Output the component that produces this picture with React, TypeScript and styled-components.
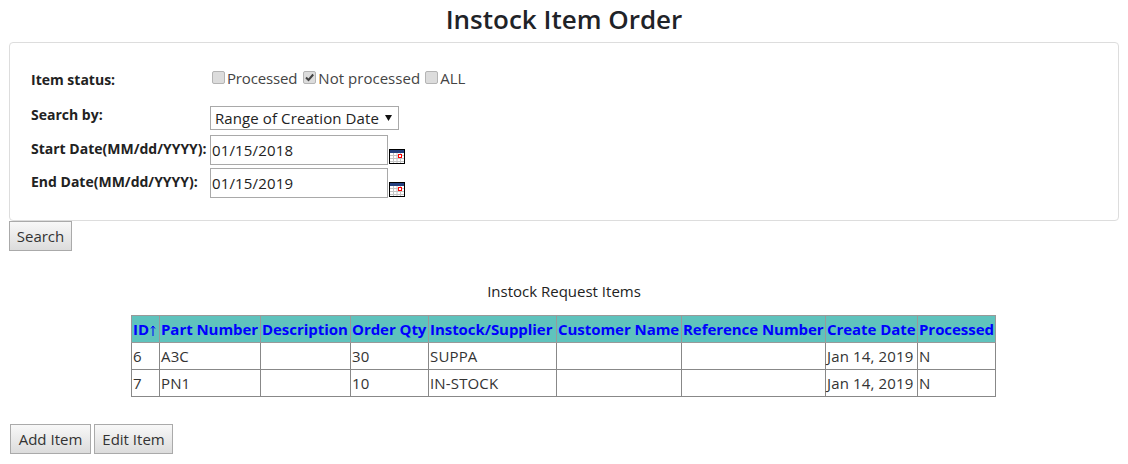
import React from "react";
import styled, { createGlobalStyle } from "styled-components";

const Global = createGlobalStyle`
  html, body { margin: 0; padding: 0; background: #fff; }
  body { font-family: "Open Sans", "Noto Sans", "Liberation Sans", sans-serif; font-size: 15px; color: #222; }
  * { box-sizing: border-box; }
`;

const Page = styled.div`
  width: 1128px;
  height: 464px;
  padding: 0 9px;
  overflow: hidden;
`;

const Title = styled.h1`
  margin: 0;
  height: 42px;
  font-size: 26px;
  line-height: 38px;
  font-weight: 600;
  text-align: center;
  color: #1f2328;
`;

const Panel = styled.section`
  width: 1110px;
  height: 179px;
  border: 1px solid #ddd;
  border-radius: 4px;
  padding: 21px 21px 0;
  display: grid;
  grid-template-columns: 179px 1fr;
  grid-template-rows: 30px 41px 33px 33px;
  align-items: center;
`;

const Label = styled.label<{ $raise?: boolean }>`
  font-size: 14px;
  font-weight: 700;
  color: #222;
  white-space: nowrap;
  padding-bottom: ${(p) => (p.$raise ? "6px" : "0")};
`;

const StatusRow = styled.div`
  display: flex;
  align-items: center;
  padding-bottom: 2px;
`;

const Option = styled.label<{ $track: number; $after: number }>`
  display: inline-flex;
  align-items: center;
  gap: 2px;
  margin: 0 ${(p) => p.$after}px 0 2px;
  font-size: 15px;
  letter-spacing: ${(p) => p.$track}px;
  color: #444;
`;

const Box = styled.input`
  appearance: none;
  width: 13px;
  height: 13px;
  margin: 0 0 2px;
  border: 1px solid #b4b4b4;
  border-radius: 2px;
  background: #dcdcdc no-repeat center;
  &:checked {
    background-image: url("data:image/svg+xml,%3Csvg xmlns='http://www.w3.org/2000/svg' width='11' height='11' viewBox='0 0 11 11'%3E%3Cpath d='M2 5.5L4.5 8L9.2 2.5' fill='none' stroke='%23444' stroke-width='2'/%3E%3C/svg%3E");
  }
`;

const SelectCell = styled.div`
  align-self: end;
  display: flex;
  margin-bottom: 5px;
`;

const Select = styled.select`
  appearance: none;
  width: 189px;
  height: 24px;
  padding: 0 0 0 4px;
  border: 1px solid #a9a9a9;
  border-radius: 0;
  font-family: inherit;
  font-size: 15px;
  letter-spacing: 0.1px;
  color: #222;
  background: #fff url("data:image/svg+xml,%3Csvg xmlns='http://www.w3.org/2000/svg' width='7' height='6'%3E%3Cpath d='M0 0H7L3.5 6Z' fill='%23111'/%3E%3C/svg%3E") no-repeat 174px 8px;
`;

const DateRow = styled.div`
  align-self: start;
  display: flex;
  align-items: flex-end;
  gap: 1px;
`;

const DateInput = styled.input`
  width: 178px;
  height: 30px;
  padding: 0 0 0 1px;
  border: 1px solid #a9a9a9;
  border-radius: 0;
  font-family: inherit;
  font-size: 15px;
  letter-spacing: 0.15px;
  color: #222;
`;

const CalendarIcon = styled.svg`
  flex: none;
  margin-bottom: 1px;
`;

const Calendar = () => (
  <CalendarIcon width="16" height="15" viewBox="0 0 16 15" aria-hidden="true">
    <rect x="0.5" y="0.5" width="15" height="14" fill="#fff" stroke="#000" />
    <rect x="1" y="1" width="14" height="3" fill="#24407f" />
    <path d="M1 6.5h14M1 9.5h14M1 12.5h14M4.5 4v10M8 4v10M11.5 4v10" stroke="#c4c4c4" strokeWidth="1" />
    <rect x="9.5" y="5.5" width="3" height="3" fill="#fff" stroke="#f00" />
  </CalendarIcon>
);

const Button = styled.button<{ $w: number }>`
  width: ${(p) => p.$w}px;
  height: 30px;
  padding: 0;
  border: 1px solid #aaa;
  border-radius: 0;
  background: linear-gradient(#f8f8f8, #dcdcdc);
  font-family: inherit;
  font-size: 15px;
  color: #333;
`;

const Caption = styled.div`
  margin-top: 30px;
  height: 34px;
  text-align: center;
  font-size: 15px;
  line-height: 20px;
  color: #222;
`;

const Table = styled.table`
  margin-left: 122px;
  border-collapse: collapse;
  table-layout: fixed;
  width: 865px;
`;

const Th = styled.th`
  height: 27px;
  padding: 0 1px;
  background: #5fc3bd;
  border: 1px solid #999;
  color: #0000ff;
  font-size: 15px;
  font-weight: 700;
  letter-spacing: -0.05px;
  text-align: left;
  white-space: nowrap;
  overflow: hidden;
`;

const SortIcon = styled.svg`
  vertical-align: -1px;
  margin-left: 1px;
`;

const SortArrow = () => (
  <SortIcon width="6" height="11" viewBox="0 0 6 11" aria-hidden="true">
    <path d="M3 11V1M1 3.5L3 1L5 3.5" fill="none" stroke="#0000ff" strokeWidth="1" />
  </SortIcon>
);

const Td = styled.td`
  height: 27px;
  padding: 0 1px;
  border: 1px solid #888;
  font-size: 15px;
  letter-spacing: 0.15px;
  color: #333;
  white-space: nowrap;
`;

const Actions = styled.div`
  margin: 27px 0 0 1px;
  display: flex;
  gap: 3px;
`;

const columns = [
  ["ID", 28], ["Part Number", 101], ["Description", 90], ["Order Qty", 78], ["Instock/Supplier", 128],
  ["Customer Name", 125], ["Reference Number", 144], ["Create Date", 92], ["Processed", 78],
] as const;

const rows = [
  ["6", "A3C", "", "30", "SUPPA", "", "", "Jan 14, 2019", "N"],
  ["7", "PN1", "", "10", "IN-STOCK", "", "", "Jan 14, 2019", "N"],
];

export default function App() {
  return (
    <Page>
      <Global />
      <Title>Instock Item Order</Title>
      <Panel>
        <Label>Item status:</Label>
        <StatusRow>
          <Option $track={-0.15} $after={4}><Box type="checkbox" disabled />Processed</Option>
          <Option $track={0.03} $after={3}><Box type="checkbox" disabled defaultChecked />Not processed</Option>
          <Option $track={0} $after={0}><Box type="checkbox" disabled />ALL</Option>
        </StatusRow>
        <Label>Search by:</Label>
        <SelectCell><Select defaultValue="range"><option value="range">Range of Creation Date</option></Select></SelectCell>
        <Label $raise>Start Date(MM/dd/YYYY):</Label>
        <DateRow><DateInput defaultValue="01/15/2018" /><Calendar /></DateRow>
        <Label $raise>End Date(MM/dd/YYYY):</Label>
        <DateRow><DateInput defaultValue="01/15/2019" /><Calendar /></DateRow>
      </Panel>
      <Button $w={63}>Search</Button>
      <Caption>Instock Request Items</Caption>
      <Table>
        <colgroup>{columns.map(([n, w]) => <col key={n} width={w} />)}</colgroup>
        <thead>
          <tr>
            {columns.map(([n]) => (
              <Th key={n}>{n}{n === "ID" && <SortArrow />}</Th>
            ))}
          </tr>
        </thead>
        <tbody>
          {rows.map((r) => <tr key={r[0]}>{r.map((c, i) => <Td key={i}>{c}</Td>)}</tr>)}
        </tbody>
      </Table>
      <Actions><Button $w={81}>Add Item</Button><Button $w={79}>Edit Item</Button></Actions>
    </Page>
  );
}
